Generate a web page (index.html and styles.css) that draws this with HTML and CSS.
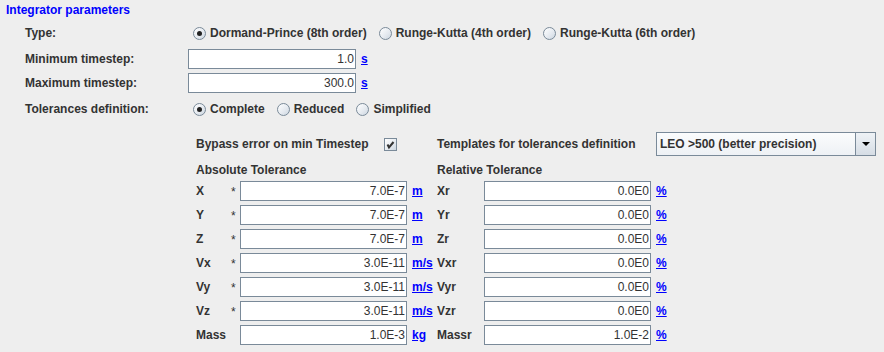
FILE: index.html
```html
<!DOCTYPE html>
<html>
<head>
<meta charset="utf-8">
<link rel="stylesheet" href="styles.css">
</head>
<body>
<div class="panel">
  <div class="title">Integrator parameters</div>

  <div class="frow mt6">
    <span class="lbl">Type:</span>
    <div class="radios">
      <span class="radio"><span class="dot on"></span>Dormand-Prince (8th order)</span>
      <span class="radio"><span class="dot"></span>Runge-Kutta (4th order)</span>
      <span class="radio"><span class="dot"></span>Runge-Kutta (6th order)</span>
    </div>
  </div>
  <div class="frow mt6">
    <span class="lbl">Minimum timestep:</span>
    <div class="ctrl"><span class="field wtime">1.0</span><a class="unit">s</a></div>
  </div>
  <div class="frow mt4">
    <span class="lbl">Maximum timestep:</span>
    <div class="ctrl"><span class="field wtime">300.0</span><a class="unit">s</a></div>
  </div>
  <div class="frow mt6">
    <span class="lbl">Tolerances definition:</span>
    <div class="radios">
      <span class="radio"><span class="dot on"></span>Complete</span>
      <span class="radio"><span class="dot"></span>Reduced</span>
      <span class="radio"><span class="dot"></span>Simplified</span>
    </div>
  </div>

  <div class="tol">
    <div class="bypass"><span class="lbl">Bypass error on min Timestep</span>
      <span class="check"><svg width="11" height="11" viewBox="0 0 11 11"><path d="M2.5 5.5 L4 8.5 L8.5 3" fill="none" stroke="#333" stroke-width="2"/></svg></span>
    </div>
    <span class="lbl tpl">Templates for tolerances definition</span>
    <div class="combo"><span class="combo-text">LEO &gt;500 (better precision)</span><span class="combo-btn"><span class="tri"></span></span></div>

    <span class="lbl hdr habs">Absolute Tolerance</span>
    <span class="lbl hdr hrel">Relative Tolerance</span>

    <span class="lbl">X</span><span class="star">*</span><span class="field">7.0E-7</span><a class="unit u1">m</a>
    <span class="lbl">Xr</span><span class="field">0.0E0</span><a class="unit u2">%</a>

    <span class="lbl">Y</span><span class="star">*</span><span class="field">7.0E-7</span><a class="unit u1">m</a>
    <span class="lbl">Yr</span><span class="field">0.0E0</span><a class="unit u2">%</a>

    <span class="lbl">Z</span><span class="star">*</span><span class="field">7.0E-7</span><a class="unit u1">m</a>
    <span class="lbl">Zr</span><span class="field">0.0E0</span><a class="unit u2">%</a>

    <span class="lbl">Vx</span><span class="star">*</span><span class="field">3.0E-11</span><a class="unit u1">m/s</a>
    <span class="lbl">Vxr</span><span class="field">0.0E0</span><a class="unit u2">%</a>

    <span class="lbl">Vy</span><span class="star">*</span><span class="field">3.0E-11</span><a class="unit u1">m/s</a>
    <span class="lbl">Vyr</span><span class="field">0.0E0</span><a class="unit u2">%</a>

    <span class="lbl">Vz</span><span class="star">*</span><span class="field">3.0E-11</span><a class="unit u1">m/s</a>
    <span class="lbl">Vzr</span><span class="field">0.0E0</span><a class="unit u2">%</a>

    <span class="lbl">Mass</span><span class="star"></span><span class="field">1.0E-3</span><a class="unit u1">kg</a>
    <span class="lbl">Massr</span><span class="field">1.0E-2</span><a class="unit u2">%</a>
  </div>
</div>
</body>
</html>
```

FILE: styles.css
```css
html, body {
  margin: 0;
  padding: 0;
  background: #eeeeee;
}
body {
  font-family: "Liberation Sans", Arial, sans-serif;
  font-size: 12px;
  color: #333333;
}
.panel {
  width: 884px;
  height: 352px;
  overflow: hidden;
}
.title {
  padding: 3px 0 0 6px;
  line-height: 14px;
  height: 14px;
  font-weight: bold;
  color: #0000ff;
}
.lbl {
  font-weight: bold;
  color: #333333;
  white-space: nowrap;
}
.frow {
  display: grid;
  grid-template-columns: 163px auto;
  align-items: center;
  height: 20px;
  padding-left: 25px;
}
.mt6 { margin-top: 6px; }
.mt4 { margin-top: 4px; }
.ctrl {
  display: flex;
  align-items: center;
}
.radios {
  display: flex;
  align-items: center;
  gap: 12px;
  padding-left: 5px;
}
.radio {
  display: flex;
  align-items: center;
  gap: 4px;
  font-weight: bold;
  white-space: nowrap;
}
.dot {
  box-sizing: border-box;
  width: 13px;
  height: 13px;
  border-radius: 50%;
  border: 1px solid #7a8a99;
  background: linear-gradient(135deg, #ffffff 0%, #e4e9ef 60%, #cbd5df 100%);
  display: flex;
  align-items: center;
  justify-content: center;
  margin-top: 1px;
}
.dot.on::after {
  content: "";
  width: 5px;
  height: 5px;
  border-radius: 50%;
  background: #222222;
}
.field {
  box-sizing: border-box;
  display: block;
  height: 20px;
  line-height: 18px;
  border: 1px solid #7a8a99;
  background: #ffffff;
  text-align: right;
  padding-right: 1px;
  color: #333333;
  font-weight: normal;
  white-space: nowrap;
}
.wtime {
  width: 168px;
}
.unit {
  font-weight: bold;
  color: #0000ff;
  text-decoration: underline;
  margin-left: 5px;
}
.tol {
  margin-top: 13px;
  padding-left: 196px;
  display: grid;
  grid-template-columns: 35px 9px 167px 5px 25px 47px 167px 5px auto;
  grid-template-rows: 24px 17px repeat(7, 20px);
  row-gap: 4px;
  align-items: center;
}
.bypass {
  grid-column: 1 / 6;
  display: flex;
  align-items: center;
}
.check {
  box-sizing: border-box;
  width: 13px;
  height: 13px;
  margin-left: 15px;
  margin-top: 1px;
  border: 1px solid #7a8a99;
  background: linear-gradient(135deg, #ffffff 0%, #e4e9ef 60%, #cbd5df 100%);
  display: flex;
  align-items: center;
  justify-content: center;
}
.check svg { display: block; }
.tpl {
  grid-column: 6 / 9;
}
.combo {
  grid-column: 9;
  box-sizing: border-box;
  width: 220px;
  height: 24px;
  border: 1px solid #7a8a99;
  display: flex;
  background: linear-gradient(#fbfcfd, #eef1f5);
}
.combo-text {
  flex: 1;
  display: flex;
  align-items: center;
  padding-left: 3px;
  font-weight: bold;
  color: #333333;
  white-space: nowrap;
}
.combo-btn {
  width: 19px;
  border-left: 1px solid #7a8a99;
  background: linear-gradient(#eef2f6, #d6dde5);
  display: flex;
  align-items: center;
  justify-content: center;
}
.tri {
  width: 0;
  height: 0;
  border-left: 4px solid transparent;
  border-right: 4px solid transparent;
  border-top: 4px solid #000000;
}
.hdr {
  align-self: end;
  line-height: 14px;
}
.habs { grid-column: 1 / 6; }
.hrel { grid-column: 6 / 10; }
.star {
  font-weight: normal;
  color: #333333;
  padding-top: 2px;
}
.tol .unit {
  margin-left: 0;
}
.u1 { grid-column: 5; }
.u2 { grid-column: 9; }
```
